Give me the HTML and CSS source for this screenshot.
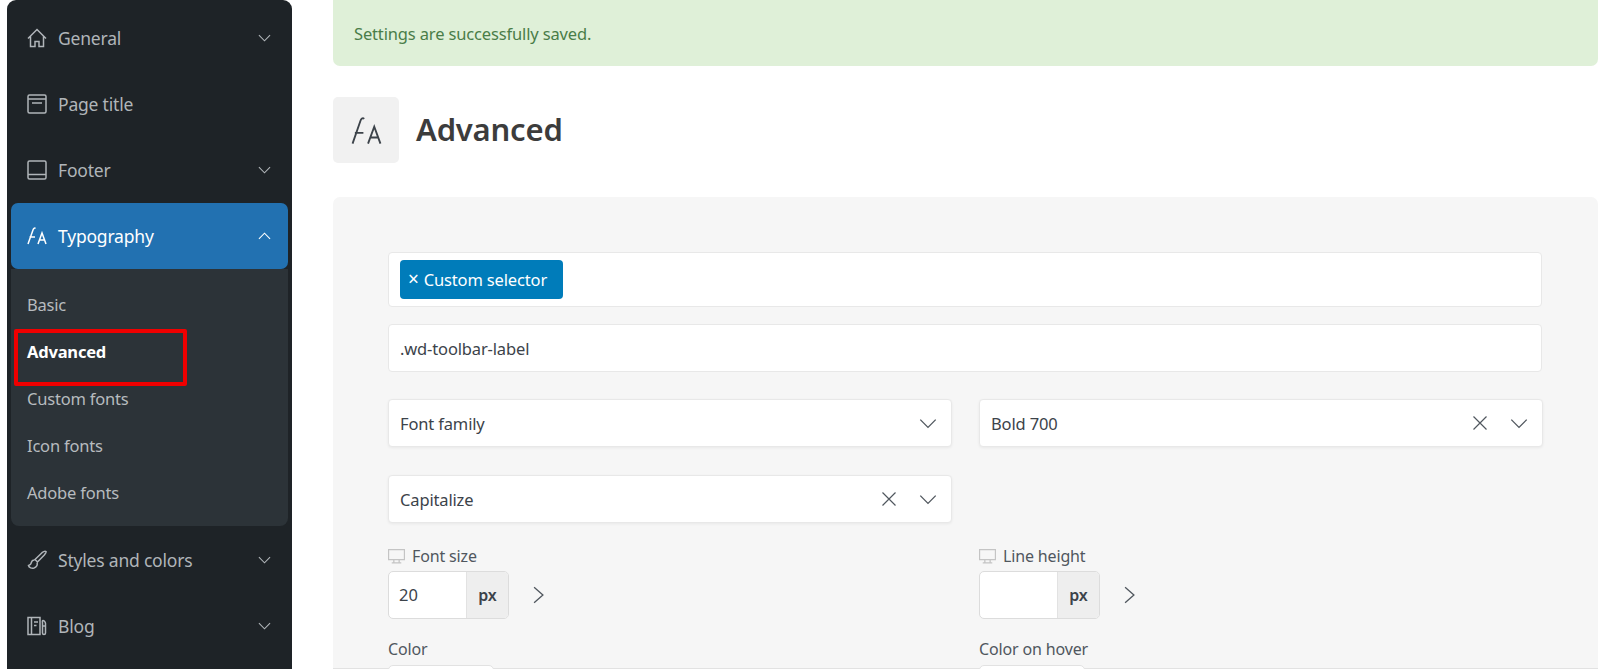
FILE: index.html
```html
<!DOCTYPE html>
<html lang="en">
<head>
<meta charset="utf-8">
<title>Advanced</title>
<link rel="stylesheet" href="styles.css">
</head>
<body>
<div class="page">
  <aside class="sidebar">
    <div class="nav-item">
      <svg class="nav-icon" viewBox="0 0 20 20"><path d="M1 10.5 10 1.5l9 9M3.5 8.5V18.5h4.500v-5h4v5h4.500V8.500"/></svg>
      <span class="nav-label">General</span>
      <svg class="caret" viewBox="0 0 14 8"><path d="M1 1l6 6 6-6"/></svg>
    </div>
    <div class="nav-item">
      <svg class="nav-icon" viewBox="0 0 20 20"><rect x="1" y="1" width="18" height="18" rx="1.500"/><path d="M1 5h18M5 9h10"/></svg>
      <span class="nav-label">Page title</span>
    </div>
    <div class="nav-item">
      <svg class="nav-icon" viewBox="0 0 20 20"><rect x="1" y="1" width="18" height="18" rx="1.500"/><path d="M1 14.500h18"/></svg>
      <span class="nav-label">Footer</span>
      <svg class="caret" viewBox="0 0 14 8"><path d="M1 1l6 6 6-6"/></svg>
    </div>
    <div class="nav-item active">
      <svg class="nav-icon" viewBox="0 0 20 20"><path d="M1 18 6 4c.5-1.500 1.500-2.500 2.500-1.500M2.500 11H8M11 18l4-11 4 11M12.500 14h5"/></svg>
      <span class="nav-label">Typography</span>
      <svg class="caret" viewBox="0 0 14 8"><path d="M1 7l6-6 6 6"/></svg>
    </div>
    <div class="submenu">
      <div class="sub-item">Basic</div>
      <div class="sub-item current">Advanced</div>
      <div class="sub-item">Custom fonts</div>
      <div class="sub-item">Icon fonts</div>
      <div class="sub-item">Adobe fonts</div>
    </div>
    <div class="nav-item">
      <svg class="nav-icon" viewBox="0 0 20 20"><path d="M19 1.500c-1-.8-2.500 0-4 1.200L8 9.500l2.500 2.500 6.800-7c1.200-1.500 2.300-2.700 1.700-3.500zM7.500 10c-3 0-3 2-3.500 3.500-.3 1-1.500 1.500-2.500 2 .5 2.500 3.500 3 5.500 2.500 2.500-.7 3.800-3 3-5.500"/></svg>
      <span class="nav-label">Styles and colors</span>
      <svg class="caret" viewBox="0 0 14 8"><path d="M1 1l6 6 6-6"/></svg>
    </div>
    <div class="nav-item">
      <svg class="nav-icon" viewBox="0 0 20 20"><path d="M1 1.500h12V18.500H1zM4.500 1.500v17M7 6h4M7 9.500h2.500M16 4.500c1 0 2.500 1.500 2.500 3V17a1.500 1.500 0 0 1-3 0V7.500c0-1.500-.500-3 .500-3zM15.500 10h3"/></svg>
      <span class="nav-label">Blog</span>
      <svg class="caret" viewBox="0 0 14 8"><path d="M1 1l6 6 6-6"/></svg>
    </div>
  </aside>

  <main class="main">
    <div class="alert">Settings are successfully saved.</div>
    <header class="heading">
      <div class="heading-icon">
        <svg viewBox="0 0 20 20"><path d="M1 18.500 6 4c.5-1.500 1.500-2.500 2.500-1.500M2.500 11.500H8M11 18.500l4-11 4 11M12.500 14.500h5"/></svg>
      </div>
      <h1 class="title">Advanced</h1>
    </header>

    <section class="panel">
      <div class="box tag-box"><span class="tag"><span class="tag-x">×</span> Custom selector</span></div>
      <div class="box text-box">.wd-toolbar-label</div>

      <div class="grid selects">
        <div class="box select">
          <span class="select-value">Font family</span>
          <svg class="chev" viewBox="0 0 16 10"><path d="M1 1.500l7 7 7-7"/></svg>
        </div>
        <div class="box select">
          <span class="select-value">Bold 700</span>
          <svg class="clear" viewBox="0 0 16 16"><path d="M1.500 1.500l13 13M14.500 1.500l-13 13"/></svg>
          <svg class="chev" viewBox="0 0 16 10"><path d="M1 1.500l7 7 7-7"/></svg>
        </div>
        <div class="box select">
          <span class="select-value">Capitalize</span>
          <svg class="clear" viewBox="0 0 16 16"><path d="M1.500 1.500l13 13M14.500 1.500l-13 13"/></svg>
          <svg class="chev" viewBox="0 0 16 10"><path d="M1 1.500l7 7 7-7"/></svg>
        </div>
      </div>

      <div class="grid metrics">
        <div class="field">
          <div class="label">
            <svg class="device" viewBox="0 0 16 14"><path d="M.5.500h15v9.500H.5zM5.500 10v3M10.500 10v3M3.500 13h9"/></svg>
            <span>Font size</span>
          </div>
          <div class="unit-row">
            <div class="unit-input">
              <span class="unit-value">20</span>
              <span class="unit">px</span>
            </div>
            <svg class="more" viewBox="0 0 10 16"><path d="M1 1l8 7-8 7"/></svg>
          </div>
        </div>
        <div class="field">
          <div class="label">
            <svg class="device" viewBox="0 0 16 14"><path d="M.5.500h15v9.500H.5zM5.500 10v3M10.500 10v3M3.500 13h9"/></svg>
            <span>Line height</span>
          </div>
          <div class="unit-row">
            <div class="unit-input">
              <span class="unit-value"></span>
              <span class="unit">px</span>
            </div>
            <svg class="more" viewBox="0 0 10 16"><path d="M1 1l8 7-8 7"/></svg>
          </div>
        </div>
        <div class="field">
          <div class="label color-label">Color</div>
          <div class="swatch"></div>
        </div>
        <div class="field">
          <div class="label color-label">Color on hover</div>
          <div class="swatch"></div>
        </div>
      </div>
    </section>
  </main>
</div>
</body>
</html>
```
FILE: styles.css
```css
* { box-sizing: border-box; }
html, body { margin: 0; height: 100%; overflow: hidden; background: #fff; }
body { font-family: "Noto Sans", "Open Sans", sans-serif; color: #3c434a; }

.page { display: flex; align-items: flex-start; height: 669px; overflow: hidden; }

.sidebar {
  flex: none;
  width: 285px;
  height: 669px;
  margin-left: 7px;
  padding: 5px 4px 0;
  background: #1e2327;
  border-radius: 9px 9px 0 0;
}

.nav-item {
  display: flex;
  align-items: center;
  height: 66px;
  padding: 0 16px;
  color: #b0b5b9;
  font-size: 17.500px;
  border-radius: 7px;
}
.nav-item.active { background: #2271b1; color: #fff; }
.nav-icon {
  flex: none;
  width: 20px;
  height: 20px;
  margin-right: 11px;
  fill: none;
  stroke: currentColor;
  stroke-width: 1.500;
}
.nav-label { flex: 1; letter-spacing: -.2px; }
.caret { flex: none; width: 13px; height: 8px; margin-right: 1px; fill: none; stroke: currentColor; stroke-width: 1.200; }

.submenu {
  padding: 12px 16px 10px;
  background: #2c3338;
  border-radius: 0 0 8px 8px;
  margin-bottom: 1px;
}
.sub-item {
  display: flex;
  align-items: center;
  height: 47px;
  color: #b7bbbf;
  font-size: 16.500px;
  letter-spacing: -.2px;
}
.sub-item.current {
  position: relative;
  color: #fff;
  font-weight: 700;
}
.sub-item.current::after {
  content: "";
  position: absolute;
  left: -13px;
  top: 1px;
  width: 165px;
  height: 49px;
  border: 4px solid #f00000;
  border-radius: 2px;
}

.main { flex: none; width: 1265px; margin-left: 41px; }

.alert {
  height: 66px;
  padding: 22px 21px 0;
  background: #dff0d8;
  color: #4a7d48;
  font-size: 16.500px;
  letter-spacing: -.15px;
  line-height: 24px;
  border-radius: 0 0 7px 7px;
}

.heading { display: flex; align-items: center; gap: 17px; margin-top: 31px; }
.heading-icon {
  display: flex;
  align-items: center;
  justify-content: center;
  width: 66px;
  height: 66px;
  background: #f1f1f1;
  border-radius: 5px;
}
.heading-icon svg { width: 31px; height: 31px; fill: none; stroke: #3c434a; stroke-width: 1.200; }
.title { margin: 0; color: #3c3c3c; font-size: 31px; font-weight: 600; line-height: 1.2; letter-spacing: -.2px; }

.panel {
  height: 472px;
  margin-top: 34px;
  padding: 55px 56px 0 55px;
  background: #f6f6f6;
  border-radius: 7px 7px 0 0;
  border-bottom: 1px solid #e2e2e2;
}

.box {
  background: #fff;
  border: 1px solid #e8e8e8;
  border-radius: 4px;
  color: #3c434a;
  font-size: 16.500px;
  letter-spacing: -.15px;
}
.tag-box { display: flex; align-items: center; height: 55px; padding-left: 11px; }
.tag {
  display: flex;
  align-items: center;
  gap: 5px;
  height: 39px;
  padding: 0 16px 0 8px;
  background: #007cba;
  color: #fff;
  border-radius: 4px;
}
.tag-x { font-size: 19px; line-height: 1; }
.text-box { display: flex; align-items: center; height: 48px; margin-top: 17px; padding-left: 11px; }

.grid { display: grid; grid-template-columns: 564px 564px; column-gap: 27px; }
.selects { margin-top: 27px; row-gap: 28px; }
.select { display: flex; align-items: center; height: 48px; padding: 0 14px 0 11px; box-shadow: 0 1px 3px rgba(0, 0, 0, .06); }
.select-value { flex: 1; }
.clear { width: 16px; height: 16px; margin-right: 22px; fill: none; stroke: #50575e; stroke-width: 1.200; }
.chev { width: 18px; height: 11px; fill: none; stroke: #50575e; stroke-width: 1.200; }

.metrics { margin-top: 20px; }
.field { min-width: 0; }
.label {
  display: flex;
  align-items: center;
  gap: 7px;
  height: 26px;
  color: #50575e;
  font-size: 16px;
  letter-spacing: -.15px;
}
.device { width: 17px; height: 15px; fill: none; stroke: #c4c4c4; stroke-width: 1.200; }
.unit-row { display: flex; align-items: center; gap: 24px; margin-top: 2px; }
.unit-input {
  display: flex;
  width: 121px;
  height: 48px;
  background: #fff;
  border: 1px solid #dcdcdc;
  border-radius: 5px;
  overflow: hidden;
}
.unit-value { flex: 1; padding: 11px 0 0 10px; font-size: 16.500px; line-height: 24px; }
.unit {
  display: flex;
  align-items: center;
  justify-content: center;
  width: 42px;
  background: #eeeeee;
  border-left: 1px solid #e2e2e2;
  font-size: 16px;
  font-weight: 600;
}
.more { width: 11px; height: 18px; fill: none; stroke: #50575e; stroke-width: 1.200; }
.color-label { margin-top: 17px; }
.swatch {
  width: 106px;
  height: 40px;
  margin-top: 3px;
  background: #fff;
  border: 1px solid #e2e2e2;
  border-radius: 5px;
}
```
